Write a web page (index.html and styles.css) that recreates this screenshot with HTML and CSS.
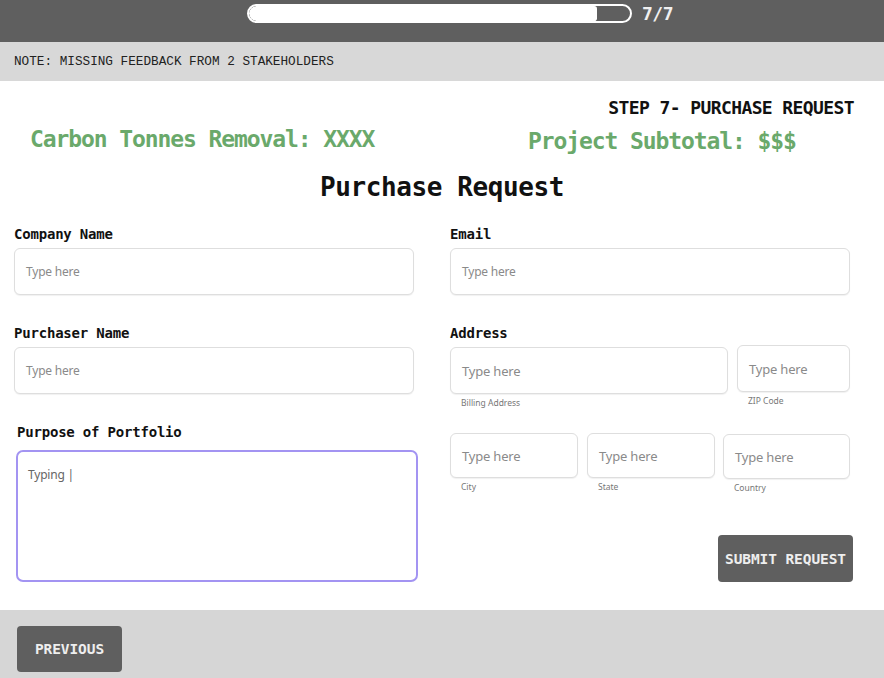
FILE: index.html
```html
<!DOCTYPE html>
<html lang="en">
<head>
<meta charset="utf-8">
<title>Purchase Request</title>
<link rel="stylesheet" href="styles.css">
</head>
<body>
<div class="page">
  <header class="topbar">
    <div class="progress"><div class="progress-fill"></div></div>
    <span class="progress-count">7/7</span>
  </header>
  <div class="note">NOTE: MISSING FEEDBACK FROM 2 STAKEHOLDERS</div>
  <main class="content">
    <div class="step">STEP 7- PURCHASE REQUEST</div>
    <div class="stats">
      <div class="stat stat-carbon">Carbon Tonnes Removal: XXXX</div>
      <div class="stat stat-subtotal">Project Subtotal: $$$</div>
    </div>
    <h1 class="title">Purchase Request</h1>
    <div class="form">
      <div class="col">
        <div class="field">
          <label class="label">Company Name</label>
          <div class="input"><span class="ph">Type here</span></div>
        </div>
        <div class="field">
          <label class="label">Purchaser Name</label>
          <div class="input"><span class="ph">Type here</span></div>
        </div>
        <div class="field field-purpose">
          <label class="label">Purpose of Portfolio</label>
          <div class="textarea">Typing |</div>
        </div>
      </div>
      <div class="col">
        <div class="field">
          <label class="label">Email</label>
          <div class="input"><span class="ph">Type here</span></div>
        </div>
        <div class="field">
          <label class="label">Address</label>
          <div class="addr-row addr-row-1">
            <div class="sub sub-billing">
              <div class="input small"><span class="ph">Type here</span></div>
              <span class="caption">Billing Address</span>
            </div>
            <div class="sub sub-zip">
              <div class="input small"><span class="ph">Type here</span></div>
              <span class="caption">ZIP Code</span>
            </div>
          </div>
          <div class="addr-row addr-row-2">
            <div class="sub sub-city">
              <div class="input small short"><span class="ph">Type here</span></div>
              <span class="caption">City</span>
            </div>
            <div class="sub sub-state">
              <div class="input small short"><span class="ph">Type here</span></div>
              <span class="caption">State</span>
            </div>
            <div class="sub sub-country">
              <div class="input small short"><span class="ph">Type here</span></div>
              <span class="caption">Country</span>
            </div>
          </div>
        </div>
        <div class="submit-row">
          <button class="btn btn-submit">SUBMIT REQUEST</button>
        </div>
      </div>
    </div>
  </main>
  <footer class="footer">
    <button class="btn btn-prev">PREVIOUS</button>
  </footer>
</div>
</body>
</html>
```
FILE: styles.css
```css
* { box-sizing: border-box; }
html, body { margin: 0; padding: 0; }
body {
  width: 884px;
  height: 678px;
  overflow: hidden;
  background: #ffffff;
  font-family: "DejaVu Sans Mono", "Liberation Mono", monospace;
  color: #111;
}
.page { display: flex; flex-direction: column; height: 678px; }

.topbar {
  height: 42px;
  background: #5f5f5f;
  display: flex;
  align-items: flex-start;
  padding-left: 247px;
  padding-top: 4px;
}
.progress {
  width: 385px;
  height: 19px;
  border: 2px solid #ffffff;
  border-radius: 10px;
  background: #5f5f5f;
  overflow: hidden;
}
.progress-fill {
  width: 348px;
  height: 100%;
  background: #ffffff;
  border-radius: 8px 3px 3px 8px;
}
.progress-count {
  margin-left: 10px;
  color: #f0f0f0;
  font-size: 18px;
  font-weight: bold;
  line-height: 18px;
  letter-spacing: -0.5px;
  margin-top: 1px;
}

.note {
  height: 39px;
  background: #d8d8d8;
  padding-left: 14px;
  padding-top: 12px;
  font-family: "Liberation Mono", "DejaVu Sans Mono", monospace;
  font-size: 12.7px;
  line-height: 16px;
  color: #222;
}

.content {
  flex: 1;
  padding-top: 17px;
}
.step {
  text-align: right;
  padding-right: 30px;
  font-size: 18px;
  font-weight: bold;
  letter-spacing: -0.6px;
  line-height: 20px;
  color: #111;
}
.stats {
  display: flex;
  margin-top: 6px;
  padding-left: 30px;
  height: 30px;
}
.stat {
  color: #6aa96b;
  font-size: 23px;
  font-weight: bold;
  letter-spacing: -1.1px;
  line-height: 30px;
}
.stat-carbon { width: 498px; }
.stat-subtotal { padding-top: 2px; }

.title {
  margin: 18px 0 0;
  text-align: center;
  font-size: 26px;
  font-weight: bold;
  letter-spacing: -0.4px;
  line-height: 30px;
  color: #111;
}

.form {
  display: grid;
  grid-template-columns: 400px 400px;
  column-gap: 36px;
  padding-left: 14px;
  margin-top: 23px;
}
.col { display: flex; flex-direction: column; }
.field { display: flex; flex-direction: column; margin-bottom: 29px; }
.label {
  font-size: 14px;
  font-weight: bold;
  line-height: 18px;
  letter-spacing: -0.2px;
  color: #111;
  margin-bottom: 5px;
}
.input {
  height: 47px;
  border: 1px solid #dedede;
  border-radius: 6px;
  background: #fff;
  box-shadow: 0 1px 1px rgba(0,0,0,0.06);
  display: flex;
  align-items: center;
  padding-left: 11px;
}
.ph {
  font-family: "Noto Sans", "Open Sans", sans-serif;
  font-size: 12px;
  color: #8a8a8a;
  letter-spacing: -0.2px;
}
.field-purpose { margin-bottom: 0; }
.field-purpose .label { margin-left: 3px; margin-bottom: 9px; }
.textarea {
  margin-left: 2px;
  width: 402px;
  height: 132px;
  border: 2px solid #a394f2;
  border-radius: 7px;
  padding: 14px 10px;
  font-family: "Noto Sans", "Open Sans", sans-serif;
  font-size: 12px;
  color: #666;
  letter-spacing: -0.2px;
}

.addr-row { display: flex; }
.sub { display: flex; flex-direction: column; }
.caption {
  font-family: "Noto Sans", "Open Sans", sans-serif;
  font-size: 8.5px;
  color: #777;
  line-height: 12px;
  margin-top: 3px;
  padding-left: 11px;
}
.small .ph { font-size: 13px; }
.sub-billing { width: 278px; }
.sub-zip { width: 113px; margin-left: 9px; margin-top: -2px; }
.input.short { height: 45px; }
.addr-row-2 { margin-top: 24px; }
.sub-city { width: 128px; }
.sub-state { width: 128px; margin-left: 9px; }
.sub-country { width: 127px; margin-left: 8px; margin-top: 1px; }

.submit-row {
  display: flex;
  justify-content: flex-end;
  margin-top: 12px;
  margin-right: -3px;
}
.btn {
  border: none;
  background: #5f5f5f;
  color: #eeeeee;
  font-family: "DejaVu Sans Mono", "Liberation Mono", monospace;
  font-weight: bold;
  font-size: 14.5px;
  letter-spacing: -0.1px;
  border-radius: 4px;
  padding: 0;
}
.btn-submit { width: 135px; height: 47px; }

.footer {
  height: 68px;
  background: #d6d6d6;
  padding-left: 17px;
  padding-top: 16px;
}
.btn-prev { width: 105px; height: 46px; }
```
